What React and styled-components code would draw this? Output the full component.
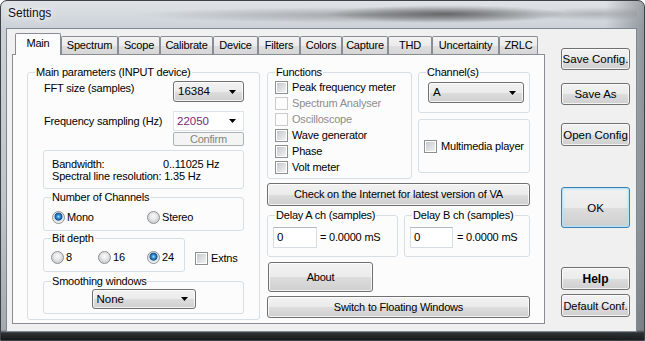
import React from 'react';
import styled, { createGlobalStyle } from 'styled-components';

const GlobalStyle = createGlobalStyle`
  html, body { margin: 0; padding: 0; background: #fff; }
  body { font-family: "Liberation Sans", Arial, sans-serif; color: #000; }
  * { box-sizing: border-box; }
`;

const Window = styled.div`
  width: 645px;
  height: 341px;
  display: flex;
  flex-direction: column;
  padding: 0 7px 8px 5px;
  border: 1px solid #3d4249;
  border-radius: 7px 7px 0 0;
  overflow: hidden;
  background:
    linear-gradient(to right, rgba(255,255,255,0) 94%, rgba(40,44,50,.35) 100%),
    linear-gradient(to bottom, #dfe3e7 0px, #cbd1d7 28px, #bec4ca 200px, #a4aab0 329px, #2e3033 332px, #121212 341px);
`;

const TitleBar = styled.div`
  height: 27px;
  padding-left: 2px;
  font-size: 12px;
  line-height: 25px;
  color: #111;
  text-shadow: 0 0 6px #fff, 0 0 10px #fff;
  background:
    radial-gradient(ellipse 120px 9px at 440px 13px, rgba(35,35,35,.55), rgba(35,35,35,0)),
    radial-gradient(ellipse 230px 8px at 360px 14px, rgba(70,70,70,.35), rgba(70,70,70,0)),
    radial-gradient(ellipse 60px 7px at 590px 13px, rgba(90,90,90,.3), rgba(90,90,90,0));
`;

const Client = styled.div`
  width: 631px;
  height: 304px;
  display: flex;
  padding: 4px 0 0 5px;
  background: #f0f0f0;
  border: 1px solid #7d8894;
`;

const TabArea = styled.div`
  width: 533px;
  display: flex;
  flex-direction: column;
`;

const TabStrip = styled.div`
  position: relative;
  z-index: 1;
  height: 22px;
  display: flex;
  align-items: flex-end;
  padding-left: 3px;
`;

const Tab = styled.div`
  flex: none;
  width: ${p => p.$w}px;
  height: ${p => (p.$active ? 22 : 18)}px;
  margin-bottom: ${p => (p.$active ? 0 : 1)}px;
  padding-top: ${p => (p.$active ? 3 : 2)}px;
  border: 1px solid #898c95;
  border-bottom: none;
  border-radius: 2px 2px 0 0;
  background: ${p => (p.$active
    ? '#fcfcfc'
    : 'linear-gradient(#f3f3f3, #ebebeb 50%, #dedede 51%, #d6d6d6)')};
  font-size: 11px;
  letter-spacing: -0.2px;
  line-height: 13px;
  text-align: center;
  white-space: nowrap;
`;

const Panel = styled.div`
  margin-top: -1px;
  height: 270px;
  border: 1px solid #898c95;
  background: #fcfcfc;
  display: grid;
  grid-template-columns: 233px 263px;
  column-gap: 7px;
  align-items: start;
  padding: 11px 0 0 14px;
  font-size: 11px;
  letter-spacing: -0.2px;
  line-height: 13px;
`;

const Group = styled.fieldset`
  margin: ${p => p.$m || 0};
  padding: 0;
  min-width: 0;
  width: ${p => (p.$w ? `${p.$w}px` : 'auto')};
  height: ${p => p.$h}px;
  border: 1px solid #d5dfe5;
  border-radius: 3px;
  flex: none;
`;

const Legend = styled.legend`
  margin-left: 7px;
  padding: 0 1px;
  font-size: 11px;
  line-height: 13px;
  letter-spacing: -0.2px;
`;

const Body = styled.div`
  padding: ${p => p.$pad};
  display: flex;
  flex-direction: column;
  align-items: ${p => p.$align || 'stretch'};
`;

const Box = styled.div`
  width: ${p => p.$w}px;
  height: ${p => p.$h}px;
  margin-top: ${p => p.$mt || 0}px;
  border: 1px solid #d5dfe5;
  border-radius: 3px;
  display: flex;
  align-items: center;
  padding-left: ${p => p.$pl || 0}px;
`;

const InfoBox = styled.div`
  margin-top: 4px;
  height: 39px;
  border: 1px solid #d5dfe5;
  border-radius: 3px;
  padding: 7px 0 0 8px;
  line-height: 12px;
`;

const InfoLine = styled.div`
  display: grid;
  grid-template-columns: 111px auto;
`;

const FieldRow = styled.div`
  display: flex;
  align-items: ${p => p.$align || 'center'};
  justify-content: space-between;
  height: ${p => p.$h}px;
  margin-top: ${p => p.$mt || 0}px;
`;

const Label = styled.span`
  padding-left: 1px;
  padding-top: ${p => p.$pt || 0}px;
`;

const winButton = `
  border: 1px solid #707070;
  border-radius: 3px;
  background: linear-gradient(#f2f2f2 0%, #ebebeb 50%, #dddddd 51%, #cfcfcf 100%);
  box-shadow: inset 0 0 0 1px rgba(255,255,255,.75);
`;

const Button = styled.div`
  ${winButton}
  width: ${p => (p.$w ? `${p.$w}px` : '100%')};
  height: ${p => p.$h}px;
  margin-top: ${p => p.$mt || 0}px;
  margin-left: ${p => p.$ml || 0}px;
  display: flex;
  align-items: center;
  justify-content: center;
  white-space: nowrap;
  font-size: ${p => p.$fs || 11}px;
  letter-spacing: ${p => (p.$fs ? 0 : -0.2)}px;
  font-weight: ${p => (p.$bold ? 700 : 400)};
  flex: none;
`;

const DisabledButton = styled.div`
  width: 71px;
  height: 14px;
  margin-left: auto;
  margin-top: 1px;
  border: 1px solid #adb2b5;
  border-radius: 2px;
  background: #f4f4f4;
  color: #838383;
  font-size: 11px;
  line-height: 12px;
  text-align: center;
`;

const DefaultButton = styled(Button)`
  border-color: #3c7fb1;
  box-shadow: inset 0 0 0 1px #b9e4f8, inset 0 0 3px 1px rgba(160,220,248,.6);
`;

const Select = styled.div`
  ${winButton}
  width: ${p => p.$w}px;
  height: ${p => p.$h}px;
  display: flex;
  align-items: center;
  justify-content: space-between;
  padding: 0 4px 0 4px;
  flex: none;
  font-size: 11.5px;
  letter-spacing: 0;
`;

const Combo = styled.div`
  width: 71px;
  height: 20px;
  border: 1px solid #dfe3ea;
  background: #fff;
  display: flex;
  align-items: center;
  justify-content: space-between;
  padding: 0 4px 0 3px;
  color: #7a1f7c;
  font-size: 11.5px;
  letter-spacing: 0;
`;

const TextInput = styled.div`
  width: ${p => p.$w}px;
  height: 21px;
  border: 1px solid #d8dce3;
  border-top-color: #b5b9c0;
  background: #fff;
  padding: 3px 0 0 3px;
  font-size: 11.5px;
  letter-spacing: 0;
  flex: none;
`;

const Arrow = () => (
  <svg width="7" height="4" viewBox="0 0 7 4" style={{ marginRight: 3 }}>
    <path d="M0 0h7L3.5 4z" fill="#000" />
  </svg>
);

const Item = styled.label`
  display: flex;
  align-items: center;
  height: 16px;
  width: ${p => (p.$w ? `${p.$w}px` : 'auto')};
  color: ${p => (p.$disabled ? '#8d8d8d' : '#000')};
  flex: none;
`;

const RadioMark = styled.span`
  width: 13px;
  height: 13px;
  margin-right: 2px;
  border-radius: 50%;
  border: 1px solid #8c8f93;
  background: ${p => (p.$on
    ? 'radial-gradient(circle at 50% 42%, #a6ddfa 0, #3a97d8 1.6px, #0f4f8e 3.6px, #d5d9de 4.3px, #f6f6f6 6px)'
    : 'radial-gradient(circle at 50% 40%, #fbfbfb 0, #e9e9e9 3px, #cfd1d3 6px)')};
  flex: none;
`;

const CheckMark = styled.span`
  width: 13px;
  height: 13px;
  margin-right: ${p => p.$gap || 4}px;
  border: 1px solid ${p => (p.$disabled ? '#cacaca' : '#8e8f8f')};
  padding: 1px;
  background: ${p => (p.$disabled
    ? '#f5f5f5 content-box, #fff'
    : 'linear-gradient(135deg, #c4c8ce, #f2f2f2) content-box, #fff')};
  flex: none;
`;

const RowFlex = styled.div`
  display: flex;
  align-items: ${p => p.$align || 'center'};
  margin-top: ${p => p.$mt || 0}px;
  gap: ${p => p.$gap || 0}px;
`;

const Column = styled.div`
  display: flex;
  flex-direction: column;
`;

const Side = styled.div`
  margin-left: 16px;
  padding-top: 15px;
  display: flex;
  flex-direction: column;
`;

const Radio = ({ on, w, children }) => (
  <Item $w={w}><RadioMark $on={on} />{children}</Item>
);

const Check = ({ disabled, gap, children }) => (
  <Item $disabled={disabled}><CheckMark $disabled={disabled} $gap={gap} />{children}</Item>
);

const tabs = [
  ['Main', 46], ['Spectrum', 57], ['Scope', 42], ['Calibrate', 53], ['Device', 45],
  ['Filters', 42], ['Colors', 42], ['Capture', 46], ['THD', 44], ['Uncertainty', 67], ['ZRLC', 39],
];

const functions = [
  ['Peak frequency meter', false], ['Spectrum Analyser', true], ['Oscilloscope', true],
  ['Wave generator', false], ['Phase', false], ['Volt meter', false],
];

export default function App() {
  return (
    <>
      <GlobalStyle />
      <Window>
        <TitleBar>Settings</TitleBar>
        <Client>
          <TabArea>
            <TabStrip>
              {tabs.map(([name, w], i) => (
                <Tab key={name} $w={w} $active={i === 0}>{name}</Tab>
              ))}
            </TabStrip>
            <Panel>
              <Group $w={233} $h={254}>
                <Legend>Main parameters (INPUT device)</Legend>
                <Body $pad="2px 15px 5px 15px">
                  <FieldRow $h={21} $align="flex-start">
                    <Label $pt={1}>FFT size (samples)</Label>
                    <Select $w={71} $h={21}>16384<Arrow /></Select>
                  </FieldRow>
                  <FieldRow $h={20} $mt={9}>
                    <Label>Frequency sampling (Hz)</Label>
                    <Combo>22050<Arrow /></Combo>
                  </FieldRow>
                  <DisabledButton>Confirm</DisabledButton>
                  <InfoBox>
                    <InfoLine><span>Bandwidth:</span><span>0..11025 Hz</span></InfoLine>
                    <div>Spectral line resolution: 1.35 Hz</div>
                  </InfoBox>
                  <Group $h={40} $m="2px 0 0 0">
                    <Legend>Number of Channels</Legend>
                    <Body $pad="5px 0 0 8px">
                      <RowFlex>
                        <Radio on w={95}>Mono</Radio>
                        <Radio>Stereo</Radio>
                      </RowFlex>
                    </Body>
                  </Group>
                  <RowFlex $mt={1} $align="flex-start">
                    <Group $w={142} $h={40}>
                      <Legend>Bit depth</Legend>
                      <Body $pad="4px 0 0 7px">
                        <RowFlex>
                          <Radio w={47}>8</Radio>
                          <Radio w={49}>16</Radio>
                          <Radio on>24</Radio>
                        </RowFlex>
                      </Body>
                    </Group>
                    <RowFlex $mt={18} style={{ marginLeft: 10 }}>
                      <Check gap={3}>Extns</Check>
                    </RowFlex>
                  </RowFlex>
                  <Group $h={39} $m="3px 0 0 0">
                    <Legend>Smoothing windows</Legend>
                    <Body $pad="1px 0 0 0" $align="center">
                      <Select $w={104} $h={20}>None<Arrow /></Select>
                    </Body>
                  </Group>
                </Body>
              </Group>

              <Column>
                <RowFlex $align="flex-start" $gap={6}>
                  <Group $w={145} $h={113}>
                    <Legend>Functions</Legend>
                    <Body $pad="0 0 0 7px">
                      {functions.map(([name, dis]) => (
                        <Check key={name} disabled={dis}>{name}</Check>
                      ))}
                    </Body>
                  </Group>
                  <Column>
                    <Group $w={112} $h={47}>
                      <Legend>Channel(s)</Legend>
                      <Body $pad="3px 0 0 9px">
                        <Select $w={96} $h={21}>A<Arrow /></Select>
                      </Body>
                    </Group>
                    <Box $w={112} $h={54} $mt={6} $pl={5}>
                      <Check>Multimedia player</Check>
                    </Box>
                  </Column>
                </RowFlex>
                <Button $h={23} $mt={4}>Check on the Internet for latest version of VA</Button>
                <RowFlex $align="flex-start" $gap={6} $mt={3}>
                  <Group $w={131} $h={48}>
                    <Legend>Delay A ch (samples)</Legend>
                    <Body $pad="5px 0 0 5px">
                      <RowFlex $gap={3}>
                        <TextInput $w={44}>0</TextInput>
                        <span>= 0.0000 mS</span>
                      </RowFlex>
                    </Body>
                  </Group>
                  <Group $w={126} $h={48}>
                    <Legend>Delay B ch (samples)</Legend>
                    <Body $pad="5px 0 0 5px">
                      <RowFlex $gap={4}>
                        <TextInput $w={43}>0</TextInput>
                        <span>= 0.0000 mS</span>
                      </RowFlex>
                    </Body>
                  </Group>
                </RowFlex>
                <Button $w={105} $h={30} $mt={5} $ml={1}>About</Button>
                <Button $h={22} $mt={4}>Switch to Floating Windows</Button>
              </Column>
            </Panel>
          </TabArea>

          <Side>
            <Button $w={69} $h={22} $fs={11.5}>Save Config.</Button>
            <Button $w={69} $h={22} $mt={13} $fs={11.5}>Save As</Button>
            <Button $w={69} $h={23} $mt={18} $fs={11.5}>Open Config</Button>
            <DefaultButton $w={69} $h={41} $mt={41} $fs={11.5}>OK</DefaultButton>
            <Button $w={69} $h={23} $mt={39} $fs={12} $bold>Help</Button>
            <Button $w={69} $h={23} $mt={4} $fs={11}>Default Conf.</Button>
          </Side>
        </Client>
      </Window>
    </>
  );
}
